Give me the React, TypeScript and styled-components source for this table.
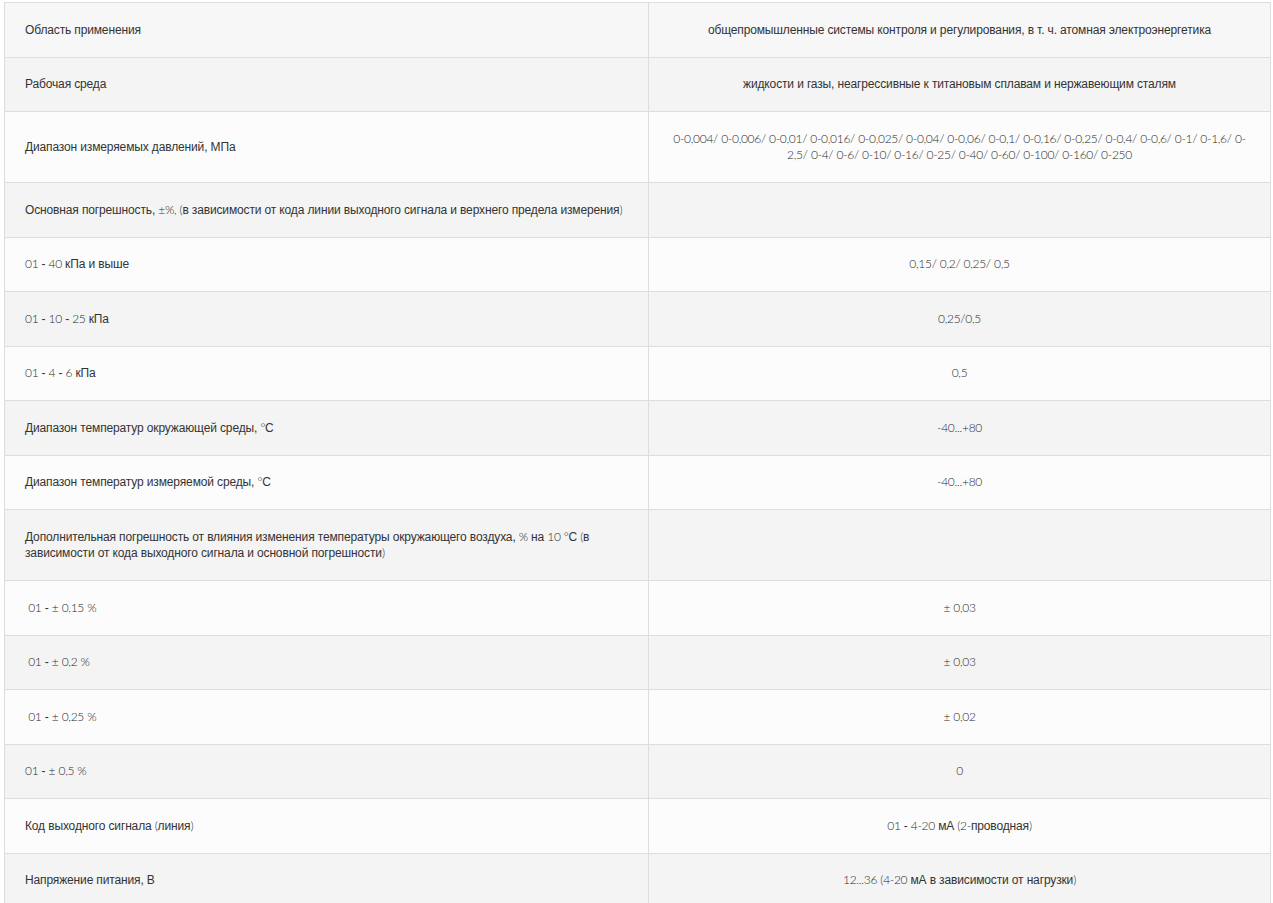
import React from 'react'
import styled, { createGlobalStyle } from 'styled-components'

const GlobalStyle = createGlobalStyle`
  html, body {
    margin: 0;
    padding: 0;
    background: #ffffff;
  }
  body {
    font-family: 'Liberation Sans', Arial, sans-serif;
  }
`

const Page = styled.div`
  padding: 2px 2px 0 4px;
`

const Table = styled.table`
  width: 1267px;
  border-collapse: collapse;
  table-layout: fixed;
  border: 1px solid #dddddd;
  font-family: 'Liberation Sans', Arial, sans-serif;
  font-size: 12px;
  line-height: 16.5px;
  letter-spacing: -0.14px;
  color: #333333;
`

const Row = styled.tr<{ $shade: 'first' | 'odd' | 'even' }>`
  background: ${p => (p.$shade === 'first' ? '#f7f7f7' : p.$shade === 'even' ? '#f4f4f4' : '#fcfcfc')};
`

const Label = styled.td`
  box-sizing: border-box;
  width: 644px;
  padding: 18.5px 20px;
  border: 1px solid #dddddd;
  text-align: left;
  vertical-align: middle;
`

const Value = styled.td`
  box-sizing: border-box;
  padding: 18.5px 20px;
  border: 1px solid #dddddd;
  text-align: center;
  vertical-align: middle;
`

// digits and some punctuation come from the site's latin webfont
const Num = styled.span`
  font-family: Lato, 'Liberation Sans', sans-serif;
  font-weight: 300;
  letter-spacing: -0.3px;
  color: #2a2a2a;
`

const Mixed = ({ text }: { text: string }) => {
  const parts = text.split(/([0-9()%/°±.,\-+]+)/)
  return (
    <>
      {parts.map((p, i) => (/[0-9()%/°±]/.test(p) ? <Num key={i}>{p}</Num> : p))}
    </>
  )
}

type Spec = { label: string; value: string }

const specs: Spec[] = [
  {
    label: 'Область применения',
    value: 'общепромышленные системы контроля и регулирования, в т. ч. атомная электроэнергетика',
  },
  { label: 'Рабочая среда', value: 'жидкости и газы, неагрессивные к титановым сплавам и нержавеющим сталям' },
  {
    label: 'Диапазон измеряемых давлений, МПа',
    value:
      '0-0,004/ 0-0,006/ 0-0,01/ 0-0,016/ 0-0,025/ 0-0,04/ 0-0,06/ 0-0,1/ 0-0,16/ 0-0,25/ 0-0,4/ 0-0,6/ 0-1/ 0-1,6/ 0-2,5/ 0-4/ 0-6/ 0-10/ 0-16/ 0-25/ 0-40/ 0-60/ 0-100/ 0-160/ 0-250',
  },
  {
    label: 'Основная погрешность, ±%, (в зависимости от кода линии выходного сигнала и верхнего предела измерения)',
    value: '',
  },
  { label: '01  - 40 кПа и выше', value: '0,15/ 0,2/ 0,25/ 0,5' },
  { label: '01 - 10 - 25 кПа', value: '0,25/0,5' },
  { label: '01 - 4 - 6 кПа', value: '0,5' },
  { label: 'Диапазон температур окружающей среды, °С', value: '-40...+80' },
  { label: 'Диапазон температур измеряемой среды, °С', value: '-40...+80' },
  {
    label:
      'Дополнительная погрешность от влияния изменения температуры окружающего воздуха, % на 10 °С (в зависимости от кода выходного сигнала и основной погрешности)',
    value: '',
  },
  { label: '\u00a001 - ± 0,15 %', value: '± 0,03' },
  { label: '\u00a001 - ± 0,2 %', value: '± 0,03' },
  { label: '\u00a001 - ± 0,25 %', value: '± 0,02' },
  { label: '01 - ± 0,5 %', value: '0' },
  { label: 'Код выходного сигнала (линия)', value: '01 - 4-20 мА (2-проводная)' },
  { label: 'Напряжение питания, В', value: '12...36 (4-20 мА в зависимости от нагрузки)' },
]

export default function App() {
  return (
    <>
      <GlobalStyle />
      <Page>
        <Table>
          <tbody>
            {specs.map((s, i) => (
              <Row key={i} $shade={i === 0 ? 'first' : i % 2 === 1 ? 'even' : 'odd'}>
                <Label>
                  <Mixed text={s.label} />
                </Label>
                <Value>
                  <Mixed text={s.value} />
                </Value>
              </Row>
            ))}
          </tbody>
        </Table>
      </Page>
    </>
  )
}
